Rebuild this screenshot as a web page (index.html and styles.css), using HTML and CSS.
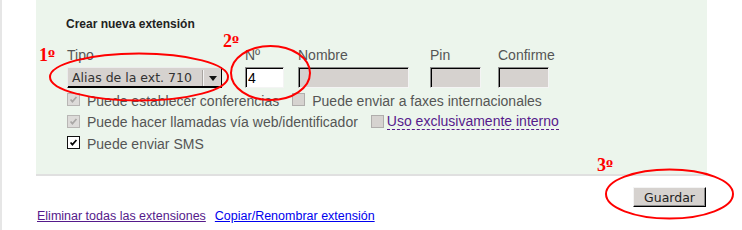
FILE: index.html
```html
<!DOCTYPE html>
<html lang="es">
<head>
    <meta charset="UTF-8">
    <title>Crear nueva extensión</title>
    <link rel="stylesheet" href="styles.css">
</head>
<body>

    <div class="page">
        <div class="panel">
            <h3 class="title">Crear nueva extensión</h3>

            <div class="fields">
                <div class="field">
                    <label>Tipo</label>
                    <div class="select">
                        <span class="select-text">Alias de la ext. 710</span>
                        <span class="select-btn"><span class="arrow"></span></span>
                    </div>
                </div>
                <div class="field">
                    <label for="num">Nº</label>
                    <input type="text" id="num" class="box box-white w-num" value="4">
                </div>
                <div class="field">
                    <label>Nombre</label>
                    <span class="box w-name"></span>
                </div>
                <div class="field">
                    <label>Pin</label>
                    <span class="box w-pin"></span>
                </div>
                <div class="field">
                    <label>Confirme</label>
                    <span class="box w-pin"></span>
                </div>
            </div>

            <div class="opts">
                <div class="opt-row">
                    <span class="opt">
                        <span class="chk chk-grey"><svg viewBox="0 0 13 13"><path d="M3 6.5 L5.2 9 L10 3.5"/></svg></span>
                        Puede establecer conferencias
                    </span>
                    <span class="opt opt-next">
                        <span class="chk chk-off"></span>
                        Puede enviar a faxes internacionales
                    </span>
                </div>
                <div class="opt-row">
                    <span class="opt">
                        <span class="chk chk-grey"><svg viewBox="0 0 13 13"><path d="M3 6.5 L5.2 9 L10 3.5"/></svg></span>
                        Puede hacer llamadas vía web/identificador
                    </span>
                    <span class="opt opt-next">
                        <span class="chk chk-off chk-tight"></span>
                        <a href="#" class="dashed">Uso exclusivamente interno</a>
                    </span>
                </div>
                <div class="opt-row">
                    <span class="opt">
                        <span class="chk chk-on"><svg viewBox="0 0 13 13"><path d="M3 6.5 L5.2 9 L10 3.5"/></svg></span>
                        Puede enviar SMS
                    </span>
                </div>
            </div>
        </div>

        <div class="actions">
            <button class="btn">Guardar</button>
        </div>

        <div class="links">
            <a href="#" class="visited">Eliminar todas las extensiones</a>
            <a href="#">Copiar/Renombrar extensión</a>
        </div>

        <!-- red marks drawn over the screenshot -->
        <svg class="marks" viewBox="0 0 742 230">
            <ellipse cx="139" cy="77" rx="89" ry="23.5"/>
            <ellipse cx="270.5" cy="73" rx="39.5" ry="27"/>
            <ellipse cx="669.5" cy="194" rx="63.5" ry="24.5"/>
            <text x="39" y="61">1<tspan class="ord">º</tspan></text>
            <text x="223" y="47">2<tspan class="ord">º</tspan></text>
            <text x="597" y="171">3<tspan class="ord">º</tspan></text>
        </svg>
    </div>

</body>
</html>
```

FILE: styles.css
```css
body {
    margin: 0;
    background: #fff;
    font-family: 'Liberation Sans', Arial, sans-serif;
    color: #555;
}
.page {
    position: relative;
    width: 740px;
    height: 230px;
    border-left: 2px solid #e6e6e6;
    overflow: hidden;
}
.panel {
    margin-left: 34px;
    width: 640px;
    height: 157px;
    padding: 17px 0 0 31px;
    background: #ecf5ec;
    border-bottom: 2px solid #e0e0e0;
}
.title {
    margin: 0 0 0 -1px;
    font-size: 12px;
    line-height: 15px;
    font-weight: bold;
    color: #222;
}
.fields {
    display: grid;
    grid-template-columns: 178px 53px 132px 68px 51px;
    margin-top: 15px;
}
.field {
    display: flex;
    flex-direction: column;
    align-items: flex-start;
}
.field label {
    font-size: 14px;
    line-height: 16px;
    margin-bottom: 4px;
}
/* old style grey select */
.select {
    display: flex;
    align-items: center;
    width: 155px;
    height: 21px;
    box-sizing: border-box;
    background: #d6d2cf;
    border: 1px solid #000;
    border-top-color: #ececec;
    border-left-color: #ececec;
    box-shadow: inset 0 -1px 0 #000;
}
.select-text {
    flex: 1;
    padding-left: 4px;
    font-family: 'DejaVu Sans', sans-serif;
    font-size: 12.5px;
    color: #333;
}
.select-btn {
    display: flex;
    align-items: center;
    justify-content: center;
    width: 17px;
    height: 16px;
    border-left: 1px solid #f4f4f4;
    box-shadow: -1px 0 0 #a8a4a0;
}
.arrow {
    width: 0;
    height: 0;
    border-left: 4.5px solid transparent;
    border-right: 4.5px solid transparent;
    border-top: 5px solid #111;
    margin-top: 1px;
}
.box {
    display: block;
    height: 21px;
    box-sizing: border-box;
    margin: 0;
    padding: 0 0 0 2px;
    background: #d6d2cf;
    border: 1px solid #f4f4f4;
    border-top-color: #8a8a8a;
    border-left-color: #8a8a8a;
    box-shadow: inset 1px 1px 0 #000;
    outline: none;
    font-family: 'Liberation Sans', Arial, sans-serif;
    font-size: 14px;
    color: #000;
}
.box-white {
    background: #fff;
}
.w-num { width: 39px; }
.w-name { width: 111px; }
.w-pin { width: 51px; }
.opts {
    margin-top: 2px;
}
.opt-row {
    display: flex;
    align-items: center;
    height: 21.5px;
    font-size: 14px;
}
.opt {
    display: flex;
    align-items: center;
}
.opt-next {
    margin-left: 13px;
}
.chk {
    display: inline-block;
    width: 13px;
    height: 13px;
    box-sizing: border-box;
    margin: -2px 7px 0 0;
}
.chk svg {
    display: block;
    width: 11px;
    height: 11px;
    fill: none;
    stroke-width: 2;
}
.chk-grey {
    background: #dddbd9;
    border: 1px solid #b8b6b4;
}
.chk-grey svg {
    stroke: #a9a7a5;
}
.chk-off {
    background: #d6d3d0;
    border: 1px solid #b0aeac;
}
.chk-tight {
    margin-right: 3px;
}
.chk-on {
    background: #fff;
    border: 1px solid #111;
}
.chk-on svg {
    stroke: #000;
}
a {
    color: #0000ee;
}
a.visited,
a.dashed {
    color: #551a8b;
}
a.dashed {
    text-decoration: none;
    border-bottom: 1px dashed #551a8b;
    line-height: 15px;
}
.actions {
    display: flex;
    justify-content: flex-end;
    width: 671px;
    margin: 11px 0 0 34px;
}
.btn {
    width: 73px;
    height: 20px;
    padding: 0;
    margin-right: 1px;
    background: #d6d2cf;
    border: 1px solid #000;
    border-top-color: #f4f4f4;
    border-left-color: #f4f4f4;
    box-shadow: inset -1px -1px 0 #8a8a8a;
    font-family: 'DejaVu Sans', sans-serif;
    font-size: 12.5px;
    color: #222;
}
.links {
    display: flex;
    gap: 9px;
    margin: 2px 0 0 35px;
    font-size: 12.5px;
    line-height: 15px;
}
.marks {
    position: absolute;
    top: 0;
    left: -2px;
    width: 742px;
    height: 230px;
    pointer-events: none;
}
.marks ellipse {
    fill: none;
    stroke: #f00;
    stroke-width: 2;
}
.marks text {
    fill: #f00;
    font-family: 'Liberation Serif', serif;
    font-weight: bold;
    font-size: 18px;
}
.marks .ord {
    font-family: 'DejaVu Serif', serif;
    font-size: 14px;
}
```
